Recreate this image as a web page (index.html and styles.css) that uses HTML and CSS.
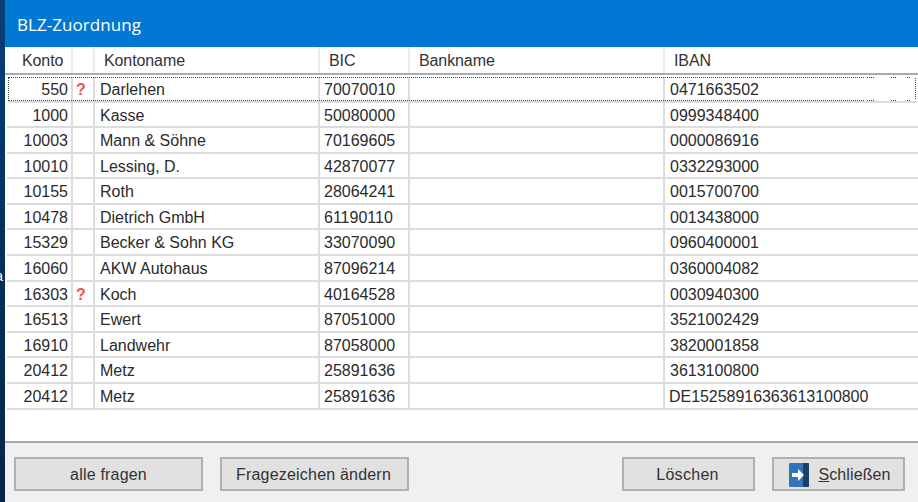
FILE: index.html
```html
<!DOCTYPE html>
<html lang="de">
<head>
<meta charset="utf-8">
<title>BLZ-Zuordnung</title>
<link rel="stylesheet" href="styles.css">
</head>
<body>
<div class="desk"><span class="peek">a</span></div>
<div class="win">
  <div class="title">BLZ-Zuordnung</div>
  <div class="panel">
    <div class="row head">
      <div class="c k">Konto</div><div class="c q"></div><div class="c n">Kontoname</div><div class="c b">BIC</div><div class="c m">Bankname</div><div class="c i">IBAN</div>
    </div>
    <div class="body">
      <div class="row sel"><div class="c k">550</div><div class="c q">?</div><div class="c n">Darlehen</div><div class="c b">70070010</div><div class="c m"></div><div class="c i">0471663502</div></div>
      <div class="row"><div class="c k">1000</div><div class="c q"></div><div class="c n">Kasse</div><div class="c b">50080000</div><div class="c m"></div><div class="c i">0999348400</div></div>
      <div class="row"><div class="c k">10003</div><div class="c q"></div><div class="c n">Mann &amp; Söhne</div><div class="c b">70169605</div><div class="c m"></div><div class="c i">0000086916</div></div>
      <div class="row"><div class="c k">10010</div><div class="c q"></div><div class="c n">Lessing, D.</div><div class="c b">42870077</div><div class="c m"></div><div class="c i">0332293000</div></div>
      <div class="row"><div class="c k">10155</div><div class="c q"></div><div class="c n">Roth</div><div class="c b">28064241</div><div class="c m"></div><div class="c i">0015700700</div></div>
      <div class="row"><div class="c k">10478</div><div class="c q"></div><div class="c n">Dietrich GmbH</div><div class="c b">61190110</div><div class="c m"></div><div class="c i">0013438000</div></div>
      <div class="row"><div class="c k">15329</div><div class="c q"></div><div class="c n">Becker &amp; Sohn KG</div><div class="c b">33070090</div><div class="c m"></div><div class="c i">0960400001</div></div>
      <div class="row"><div class="c k">16060</div><div class="c q"></div><div class="c n">AKW Autohaus</div><div class="c b">87096214</div><div class="c m"></div><div class="c i">0360004082</div></div>
      <div class="row"><div class="c k">16303</div><div class="c q">?</div><div class="c n">Koch</div><div class="c b">40164528</div><div class="c m"></div><div class="c i">0030940300</div></div>
      <div class="row"><div class="c k">16513</div><div class="c q"></div><div class="c n">Ewert</div><div class="c b">87051000</div><div class="c m"></div><div class="c i">3521002429</div></div>
      <div class="row"><div class="c k">16910</div><div class="c q"></div><div class="c n">Landwehr</div><div class="c b">87058000</div><div class="c m"></div><div class="c i">3820001858</div></div>
      <div class="row"><div class="c k">20412</div><div class="c q"></div><div class="c n">Metz</div><div class="c b">25891636</div><div class="c m"></div><div class="c i">3613100800</div></div>
      <div class="row"><div class="c k">20412</div><div class="c q"></div><div class="c n">Metz</div><div class="c b">25891636</div><div class="c m"></div><div class="c i long">DE15258916363613100800</div></div>
    </div>
  </div>
  <div class="foot">
    <button class="btn w189" type="button">alle fragen</button>
    <button class="btn w189 wide" type="button">Fragezeichen ändern</button>
    <span class="spacer"></span>
    <button class="btn w133 del" type="button">Löschen</button>
    <button class="btn w133 close" type="button">
      <svg class="ico" width="20" height="24" viewBox="0 0 20 24" aria-hidden="true">
        <rect width="20" height="24" rx="1" fill="#2f75bb"/>
        <rect x="14" width="6" height="24" rx="1" fill="#1c3f66"/>
        <path d="M3 10h6V6l6 6-6 6v-4H3z" fill="#fff"/>
      </svg>
      <span><u>S</u>chließen</span>
    </button>
  </div>
</div>
</body>
</html>
```

FILE: styles.css
```css
* { box-sizing: border-box; }
html, body { margin: 0; height: 100%; }
body {
  display: flex;
  width: 918px;
  height: 502px;
  overflow: hidden;
  font-family: "Liberation Sans", Arial, sans-serif;
  font-size: 16px;
  color: #2b2b2b;
  background: #f0f0f0;
}
.desk {
  flex: 0 0 5px;
  background: linear-gradient(#0a3f78, #03305c 50%, #06264a);
  display: flex;
  align-items: flex-start;
  justify-content: flex-end;
  overflow: hidden;
  padding-top: 268px;
  color: #fff;
  font-size: 14px;
  line-height: 16px;
}
.peek { flex: none; margin-right: 2px; }
.win { flex: 1; min-width: 0; display: flex; flex-direction: column; }
.title {
  height: 47px;
  flex: none;
  background: #0078d4;
  color: #fff;
  font-family: "Open Sans", sans-serif;
  font-size: 17px;
  letter-spacing: 0.06px;
  line-height: 50px;
  padding-left: 12px;
}
.panel {
  flex: 0 0 396px;
  background: #fff;
  border-bottom: 2px solid #a6a9ab;
  padding-left: 2px;
}
.row {
  display: grid;
  grid-template-columns: 66px 22px 225px 90px 255px 1fr;
  height: 25.58px;
  border-bottom: 2px solid #dcdcdc;
}
.head {
  height: 28px;
  margin: 0 0 2px -2px;
  padding-left: 2px;
  border-bottom: 2px solid #a9abad;
  color: #333;
  letter-spacing: -0.1px;
}
.c {
  border-right: 2px solid #dcdcdc;
  padding-left: 5px;
  line-height: 25px;
  white-space: nowrap;
  overflow: hidden;
}
.c.b { padding-left: 4px; }
.head .c { line-height: 27px; padding-left: 9px; border-right-color: #ececec; }
.c.k { text-align: right; padding: 0 3px 0 0; }
.head .c.k { text-align: left; padding-left: 15px; }
.c.i { border-right: 0; }
.c.long { padding-left: 4px; letter-spacing: -0.04px; }
.c.q { color: #f0524f; font-weight: 700; text-align: center; padding: 0 4px 0 0; }
.sel { position: relative; margin: 0 2px 0 1px; grid-template-columns: 65px 22px 225px 90px 255px 1fr; }
.sel::before {
  content: "";
  position: absolute;
  inset: 0;
  border: 1px dotted #444;
}
.sel::after {
  content: "";
  position: absolute;
  top: 0;
  bottom: 0;
  right: 0;
  width: 52px;
  background-image:
    linear-gradient(90deg, #fff 3px, transparent 3px, transparent 11px, #fff 11px, #fff 27px, transparent 27px, transparent 32px, #fff 32px, #fff 42px, transparent 42px, transparent 47px, #fff 47px),
    linear-gradient(90deg, #fff 3px, transparent 3px, transparent 11px, #fff 11px, #fff 27px, transparent 27px, transparent 32px, #fff 32px, #fff 42px, transparent 42px, transparent 47px, #fff 47px);
  background-repeat: no-repeat;
  background-size: 100% 1px;
  background-position: top, bottom;
}
.foot {
  flex: 1;
  display: flex;
  align-items: flex-start;
  gap: 17px;
  padding: 14px 13px 0 9px;
}
.spacer { flex: 1; }
.btn {
  height: 34px;
  background: #e1e1e1;
  border: 2px solid #b0b0b0;
  font: inherit;
  color: #333;
  letter-spacing: 0.2px;
  padding: 2px 0 0;
  display: flex;
  align-items: center;
  justify-content: center;
  gap: 9px;
}
.w189 { width: 189px; }
.w133 { width: 133px; }
.wide { padding-right: 2px; }
.del { padding-right: 2px; letter-spacing: 0.3px; }
.close { padding-left: 3px; letter-spacing: 0.1px; }
.ico { flex: none; }
```
